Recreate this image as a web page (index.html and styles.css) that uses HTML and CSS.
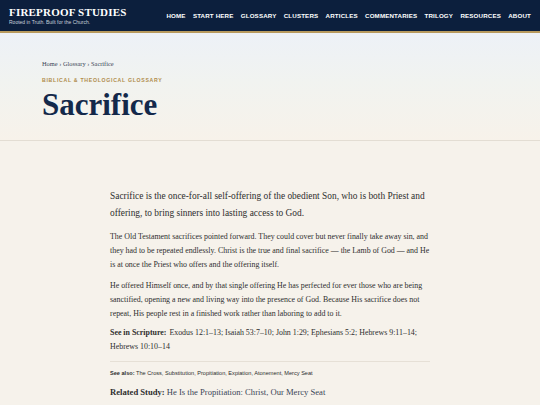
FILE: index.html
```html
<!DOCTYPE html>
<html>
<head>
    <title>Sacrifice | Fireproof Studies</title>
    <link rel="stylesheet" href="styles.css">
</head>
<body>
    <header class="site-header">
        <div class="brand">
            <div class="brand-name">FIREPROOF STUDIES</div>
            <div class="brand-tag">Rooted in Truth. Built for the Church.</div>
        </div>
        <nav class="main-nav">
            <a href="#">HOME</a>
            <a href="#">START HERE</a>
            <a href="#">GLOSSARY</a>
            <a href="#">CLUSTERS</a>
            <a href="#">ARTICLES</a>
            <a href="#">COMMENTARIES</a>
            <a href="#">TRILOGY</a>
            <a href="#">RESOURCES</a>
            <a href="#">ABOUT</a>
        </nav>
    </header>

    <section class="hero">
        <div class="hero-inner">
            <div class="crumbs">Home › Glossary › Sacrifice</div>
            <div class="eyebrow">BIBLICAL &amp; THEOLOGICAL GLOSSARY</div>
            <h1 class="term">Sacrifice</h1>
        </div>
    </section>

    <main class="entry">
        <p class="lead">Sacrifice is the once-for-all self-offering of the obedient Son, who is both Priest and offering, to bring sinners into lasting access to God.</p>

        <p>The Old Testament sacrifices pointed forward. They could cover but never finally take away sin, and they had to be repeated endlessly. Christ is the true and final sacrifice — the Lamb of God — and He is at once the Priest who offers and the offering itself.</p>

        <p class="closing">He offered Himself once, and by that single offering He has perfected for ever those who are being sanctified, opening a new and living way into the presence of God. Because His sacrifice does not repeat, His people rest in a finished work rather than laboring to add to it.</p>

        <p class="scripture"><strong>See in Scripture:</strong> Exodus 12:1–13; Isaiah 53:7–10; John 1:29; Ephesians 5:2; Hebrews 9:11–14; Hebrews 10:10–14</p>

        <div class="see-also"><strong>See also:</strong> The Cross, Substitution, Propitiation, Expiation, Atonement, Mercy Seat</div>

        <p class="related"><strong>Related Study:</strong> <span class="study-link">He Is the Propitiation: Christ, Our Mercy Seat</span></p>
    </main>
</body>
</html>
```

FILE: styles.css
```css
body {
    margin: 0;
    background: #f6f2eb;
    font-family: "Liberation Serif", serif;
    color: #2b2b2b;
}

a {
    color: inherit;
    text-decoration: none;
}

.site-header {
    display: flex;
    justify-content: space-between;
    align-items: center;
    height: 31px;
    padding: 0 9px;
    background: #0c1f3d;
    border-bottom: 2px solid #b89a5e;
    color: #fff;
}

.brand-name {
    font-family: "Liberation Serif", serif;
    font-weight: bold;
    font-size: 11px;
    letter-spacing: 0.2px;
    line-height: 12px;
}

.brand-tag {
    font-family: "Liberation Sans", sans-serif;
    font-size: 5px;
    color: #c9d1dc;
    margin-top: 1px;
}

.main-nav {
    display: flex;
    gap: 7.3px;
}

.main-nav a {
    font-family: "Liberation Sans", sans-serif;
    font-weight: bold;
    font-size: 6.2px;
    letter-spacing: 0.15px;
}

.hero {
    height: 107px;
    background: linear-gradient(180deg, #edf1f7 0%, #f1f3f0 45%, #f7f2ea 100%);
    border-bottom: 1px solid #e3ddd3;
}

.hero-inner {
    padding: 27px 42px 0;
}

.crumbs {
    font-family: "Liberation Serif", serif;
    font-size: 6.4px;
    color: #3a4556;
}

.eyebrow {
    margin-top: 10px;
    font-family: "Liberation Sans", sans-serif;
    font-weight: bold;
    font-size: 5.2px;
    letter-spacing: 0.7px;
    color: #b08c4c;
}

.term {
    margin: 4px 0 0;
    font-family: "Liberation Serif", serif;
    font-size: 31px;
    font-weight: bold;
    color: #13284a;
}

.entry {
    width: 320px;
    margin: 0 auto;
    padding-top: 47px;
    font-family: "Liberation Serif", serif;
    font-size: 7.9px;
    line-height: 13.8px;
    color: #2e2e2e;
}

.entry p {
    margin: 0 0 8px;
}

.entry .lead {
    font-size: 9.4px;
    line-height: 17px;
}

.entry .closing {
    margin-bottom: 5px;
}

.entry .scripture {
    margin-bottom: 8px;
}

.entry .scripture strong {
    margin-right: 1px;
}

.see-also {
    border-top: 1px solid #e6e0d6;
    padding-top: 7px;
    font-family: "Liberation Sans", sans-serif;
    font-size: 5.6px;
    line-height: 9px;
}

.entry .related {
    margin-top: 8px;
    font-size: 8.6px;
}

.study-link {
    color: #3a4556;
}
```
